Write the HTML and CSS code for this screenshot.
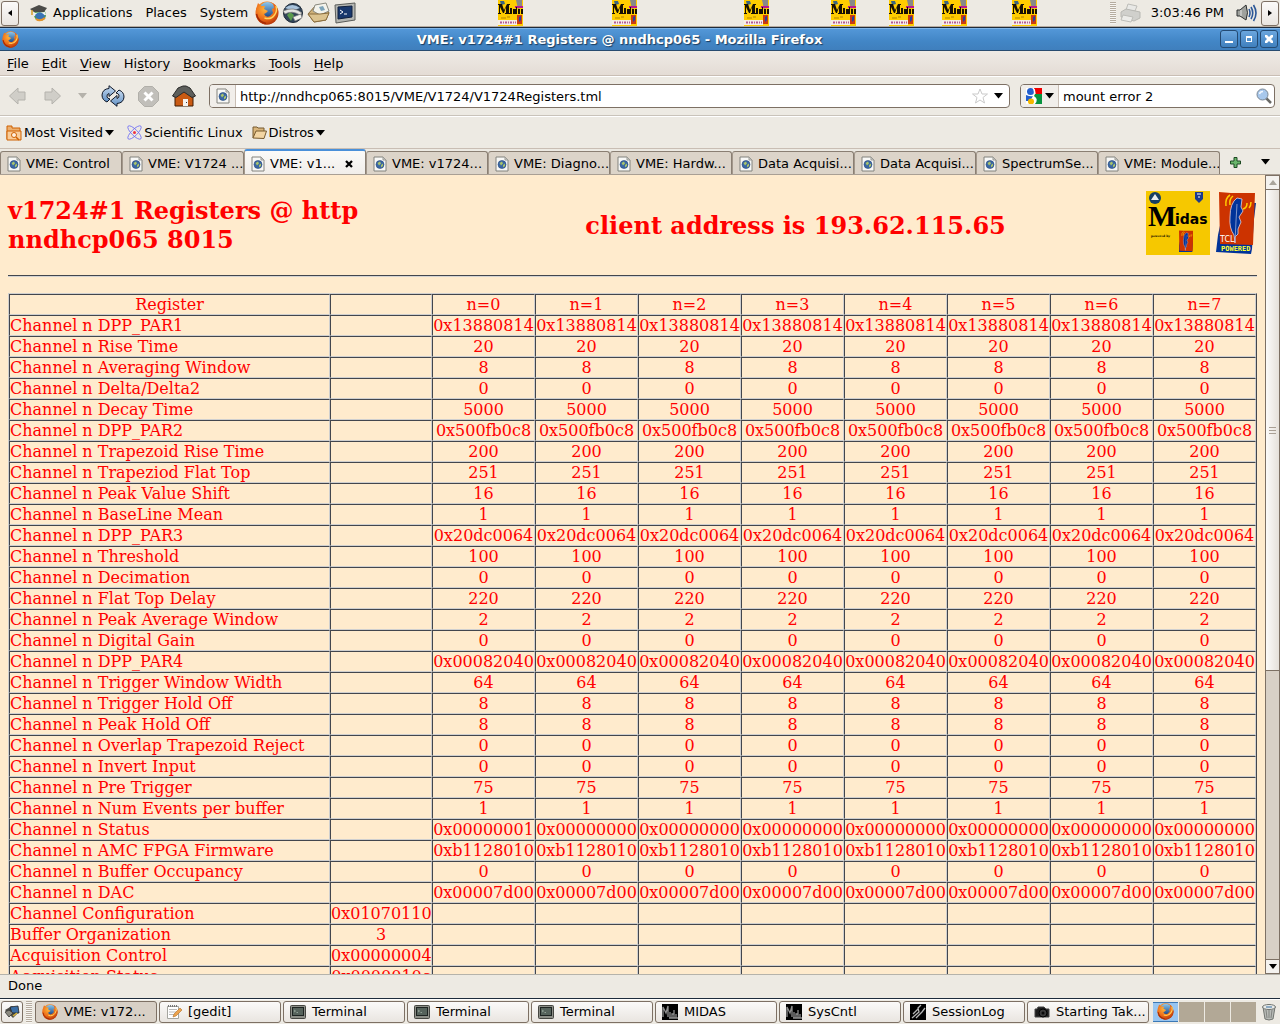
FILE: index.html
```html
<!DOCTYPE html>
<html lang="en">

<head>
    <meta charset="UTF-8">
    <title>VME: v1724#1 Registers @ nndhcp065</title>
    <link rel="stylesheet" href="styles.css">
</head>

<body>
    <!-- shared icons -->
    <svg class="defs" width="0" height="0">
        <defs>
            <radialGradient id="foxFill" cx="40%" cy="30%" r="75%">
                <stop offset="0" stop-color="#ffb53a" />
                <stop offset="0.6" stop-color="#ec6a17" />
                <stop offset="1" stop-color="#b03008" />
            </radialGradient>
            <linearGradient id="globeFill" x1="0" y1="0" x2="0" y2="1">
                <stop offset="0" stop-color="#8cc8ee" />
                <stop offset="1" stop-color="#16407f" />
            </linearGradient>
            <linearGradient id="arrowFill" x1="0" y1="0" x2="0" y2="1">
                <stop offset="0" stop-color="#c9dcf0" />
                <stop offset="1" stop-color="#5e8fc4" />
            </linearGradient>
        </defs>
        <symbol id="firefox" viewBox="0 0 24 24">
            <circle cx="12" cy="12" r="11.5" fill="url(#foxFill)" />
            <circle cx="12.500" cy="9" r="8" fill="url(#globeFill)" />
            <path d="M1 8 L3 2 L6 5 L10 5 L9 8 L13 10 L11 12 L9 13 Q11 17 15 15 L18 12 L17 8 L19 7 L18 2 Q24 7 23 14 Q20 23 12 23.500 Q2 23 1 13 Z" fill="url(#foxFill)" />
            <path d="M21 5 Q22.500 10 19.500 14 Q16 19 9.500 17" fill="none" stroke="#ffd35a" stroke-width="1.500" />
            <path d="M1.500 13 Q3 21 11 22.500" fill="none" stroke="#a52a05" stroke-width="1.500" />
        </symbol>
        <symbol id="page" viewBox="0 0 14 16">
            <path d="M1 1 H10 L13 4 V15 H1 Z" fill="#f8f8f6" stroke="#82827d" />
            <path d="M10 1 V4 H13 Z" fill="#d5d5d0" stroke="#9a9a95" />
            <circle cx="7" cy="8.500" r="4" fill="#3a67a5" stroke="#27487c" stroke-width=".6" />
            <path d="M4.500 7 L7 5.500 L8 7.500 L6 9.500 Z M8 9 L10 7.500 L10 10 L8 11.500 Z" fill="#a9c46a" />
        </symbol>
        <symbol id="tcl" viewBox="0 0 40 64">
            <path d="M36 12 L40 12 L38 28 L36 58 L35 63 L0 61 L2 44 L5 30 Z" fill="#003399" />
            <path d="M3 1 L15 2 L39 2 L37 54 L4 53 Z" fill="#cc3300" />
            <path d="M10 15 Q9 7 14 4 M14 14 Q13 8 17 5 M27 18 Q31 17 31 12 M33 17 Q35 15 35 11" fill="none" stroke="#ffcc00" stroke-width="1.500" />
            <path d="M19 52 L18 44 Q13 37 14 26 Q14 12 21 7 L26 8 L25 16 L27 20 L23 26 L25 31 L22 38 L22 43 L19 46 Z" fill="#003399" stroke="#dfd3df" stroke-width=".8" />
            <path d="M19 51 L20 30 L21 13" fill="none" stroke="#9cacd4" stroke-width=".8" />
        </symbol>
        <symbol id="midas" viewBox="0 0 25 26">
            <path d="M0 0 H25 V26 H0 Z" fill="#ffcc00" />
            <path d="M2 1 L6 1 L7 4 L3 5 Z" fill="#3b6580" />
            <path d="M18 0 H24 V7 L20 9 Z" fill="#888" />
            <path d="M17 6 H25 V8 H17 Z" fill="#bd168d" />
            <path d="M0 20 H19 V25 H0 Z" fill="#f5eee5" />
            <path d="M2 22.500 H18" fill="none" stroke="#b35895" stroke-width="2" stroke-dasharray="2 1 1 1" />
            <path d="M3 18 H8 M9 17 H12" stroke="#b58700" />
            <path d="M19 15 H24 V24 H19 Z" fill="#c93b12" />
            <path d="M21 22 L21 17 L23 16 V20 Z" fill="#2345a0" />
            <path d="M0 4 H4 L6 10 L9 4 H12 V5 H11 V13 H12 V14 H7 V13 H8 V7 L6 13 H5 L2 7 V13 H3 V14 H0 V13 H1 V5 H0 Z M12 8 H14 V14 H12 Z M15 9 H18 V7 H19 V14 H15 Z M20 9 H22 V14 H20 Z M23 9 H25 V14 H23 Z" fill="#171003" />
        </symbol>
        <symbol id="terminal" viewBox="0 0 16 16">
            <rect x=".5" y="1.500" width="15" height="13" rx="1" fill="#8d8f88" stroke="#464742" />
            <rect x="2.500" y="3.500" width="11" height="8" fill="#56635c" stroke="#1e2422" />
            <path d="M4 6 L5.500 7 L4 8 M6.500 8.500 H8" fill="none" stroke="#aebdb0" stroke-width=".7" />
        </symbol>
        <symbol id="midasbw" viewBox="0 0 16 16">
            <path d="M0 0 H16 V16 H0 Z" fill="#000" />
            <path d="M1 13 V3 L4 9 L6 2 V13 M8 8 V14 M10 14 V10 H12 V6 V14 Z M14 10 V14 M7 14 H16" fill="none" stroke="#8f8f8f" stroke-width="1.300" />
        </symbol>
        <symbol id="down" viewBox="0 0 9 6">
            <path d="M0 0 H9 L4.500 5.500 Z" fill="#000" />
        </symbol>
    </svg>

    <div class="panel top-panel">
        <button class="hide-button" aria-label="Hide panel left"><svg width="4" height="6"><path d="M4 0 V6 L0 3 Z" /></svg></button>
        <div class="panel-menus">
            <svg class="menu-logo" width="18" height="18" viewBox="0 0 18 18">
                <circle cx="10" cy="11" r="6" fill="#4d9a47" />
                <path d="M4 9 L15 8 L16 11 L4 12 Z" fill="#eef2f4" />
                <path d="M5 11 Q10 5 15 12 L13 16 H7 Z" fill="#3973b5" />
                <path d="M6 15 Q10 18 15 14" stroke="#e3932c" stroke-width="2" fill="none" />
                <path d="M0 5 L9 1 L17 4 L14 8 L4 8 Z" fill="#4b4b48" />
                <path d="M2 6 V11" stroke="#d69c2b" stroke-width="1.500" />
            </svg>
            <button>Applications</button>
            <button>Places</button>
            <button>System</button>
        </div>
        <div class="launchers">
            <svg width="24" height="24"><use href="#firefox" /></svg>
            <svg width="22" height="22" viewBox="0 0 22 22">
                <circle cx="11" cy="11" r="9.500" fill="#314459" stroke="#1e2a38" />
                <path d="M3 6 Q10 0 18 6 Q11 9 3 6 Z" fill="#a8c3dc" />
                <path d="M5 13 L8 10 L12 13 L9 19 Z" fill="#5a9a4d" />
                <path d="M1 9 Q12 4 20 11 L18 13 Q10 8 3 12 Z" fill="#e3e4e2" stroke="#777" stroke-width=".7" />
                <path d="M11 15 L19 12 L20 16 L13 19 Z" fill="#f1f1ee" stroke="#777" stroke-width=".7" />
            </svg>
            <svg width="24" height="22" viewBox="0 0 24 22">
                <path d="M1 12 L9 3 L22 10 L19 18 L7 20 Z" fill="#cfb27b" stroke="#84693b" />
                <path d="M8 3 L19 1 L22 9 L13 13 L6 9 Z" fill="#f3f3ec" stroke="#8a8a80" />
                <path d="M12 5 L16 4 L18 8 L14 9 Z" fill="#7ca4ba" />
                <path d="M1 12 L13 12 L22 11 L19 18 L7 20 Z" fill="#dcc38f" stroke="#8a6d3d" />
            </svg>
            <svg width="22" height="22" viewBox="0 0 22 22">
                <path d="M1 3 L21 1 V18 L2 21 Z" fill="#b4b6b2" stroke="#5a5c59" />
                <path d="M4 5 L18 4 V15 L4 17 Z" fill="#19386d" stroke="#10203e" />
                <path d="M6 8 L9 10 L6 12 M10 12 H13" fill="none" stroke="#fff" />
            </svg>
        </div>
        <div class="applets">
            <svg width="25" height="26"><use href="#midas" /></svg>
            <svg width="25" height="26"><use href="#midas" /></svg>
            <svg width="25" height="26"><use href="#midas" /></svg>
            <svg width="25" height="26"><use href="#midas" /></svg>
            <svg width="25" height="26"><use href="#midas" /></svg>
            <svg width="25" height="26"><use href="#midas" /></svg>
            <svg width="25" height="26"><use href="#midas" /></svg>
        </div>
        <div class="grip"></div>
        <svg class="printer" width="22" height="20" viewBox="0 0 22 20">
            <path d="M6 7 L8 1 L17 3 L15 8 Z" fill="#e9e9e6" stroke="#bdbdb8" />
            <path d="M1 9 L6 6 L20 9 V15 L14 18 L1 14 Z" fill="#d0d0cc" stroke="#b8b8b3" />
            <path d="M3 12 L13 14 L11 19 L1 17 Z" fill="#ecece9" stroke="#bdbdb8" />
        </svg>
        <time class="clock">3:03:46 PM</time>
        <svg class="volume" width="21" height="20" viewBox="0 0 21 20">
            <path d="M1 7 H4 L10 2 Q13 10 10 17 L4 13 H1 Z" fill="#9fa19d" stroke="#2e3030" />
            <path d="M5 7 V13" stroke="#e6e6e6" />
            <path d="M13 6 Q15 10 13 14 M15 4 Q18.500 10 15 16 M17.500 2 Q22.500 10 17.500 18" fill="none" stroke="#2b5797" stroke-width="1.600" />
        </svg>
        <button class="hide-button" aria-label="Hide panel right"><svg width="4" height="6"><path d="M0 0 V6 L4 3 Z" /></svg></button>
    </div>

    <div class="title-bar">
        <svg width="17" height="17"><use href="#firefox" /></svg>
        <div class="window-title">VME: v1724#1 Registers @ nndhcp065 - Mozilla Firefox</div>
        <button aria-label="Minimize"><svg width="16" height="16"><path d="M4 10 H12 V12 H4 Z" /></svg></button>
        <button aria-label="Maximize"><svg width="16" height="16"><path d="M5 5 H11 V11 H5 Z M6 7 V10 H10 V7 Z" fill-rule="evenodd" /></svg></button>
        <button aria-label="Close"><svg width="16" height="16"><path d="M4 4 H6 L8 6 L10 4 H12 V6 L10 8 L12 10 V12 H10 L8 10 L6 12 H4 V10 L6 8 L4 6 Z" /></svg></button>
    </div>

    <div class="menu-bar">
        <button><u>F</u>ile</button>
        <button><u>E</u>dit</button>
        <button><u>V</u>iew</button>
        <button>Hi<u>s</u>tory</button>
        <button><u>B</u>ookmarks</button>
        <button><u>T</u>ools</button>
        <button><u>H</u>elp</button>
    </div>

    <div class="nav-bar">
        <button class="nav-back" aria-label="Back"><svg width="17" height="18" viewBox="0 0 17 18"><path d="M.5 9 L9 1 V5 H16 V13 H9 V17 Z" fill="#d0cec8" stroke="#b4b2ac" /></svg></button>
        <button class="nav-forward" aria-label="Forward"><svg width="17" height="18" viewBox="0 0 17 18"><path d="M16.500 9 L8 1 V5 H1 V13 H8 V17 Z" fill="#d0cec8" stroke="#b4b2ac" /></svg></button>
        <button class="nav-recent" aria-label="Recent pages"><svg width="9" height="6" viewBox="0 0 9 6"><path d="M0 0 H9 L4.500 5.500 Z" fill="#b5b2ab" /></svg></button>
        <button class="nav-reload" aria-label="Reload">
            <svg width="24" height="22" viewBox="0 0 24 22">
                <path d="M6 17 Q1 15 1 10 Q1.500 4 8 3.500 V.7 L14.500 6 L8 11.500 V8.500 Q5.500 9 6 12 Q6.500 13.500 9 14 Z" fill="url(#arrowFill)" stroke="#101828" />
                <path d="M18 5 Q23 7 23 12 Q22.500 18 16 18.500 V21.300 L9.500 16 L16 10.500 V13.500 Q18.500 13 18 10 Q17.500 8.500 15 8 Z" fill="url(#arrowFill)" stroke="#101828" />
            </svg>
        </button>
        <button class="nav-stop" aria-label="Stop">
            <svg width="21" height="21" viewBox="0 0 21 21">
                <path d="M6.500 .5 H14.500 L20.500 6.500 V14.500 L14.500 20.500 H6.500 L.5 14.500 V6.500 Z" fill="#c1bfba" stroke="#b1afa9" />
                <path d="M6.500 6.500 L14.500 14.500 M14.500 6.500 L6.500 14.500" stroke="#fff" stroke-width="3" />
            </svg>
        </button>
        <button class="nav-home" aria-label="Home">
            <svg width="24" height="22" viewBox="0 0 24 22">
                <path d="M3 10 L12 4 L21 10 V21 H3 Z" fill="#c95a13" stroke="#3f1c05" />
                <path d="M0.500 11 L6 3 L11 1 H14 L18 3 L23.500 11 L20 12.500 L12 7 L4 12.500 Z" fill="#5d5f5c" stroke="#2b2b2a" />
                <path d="M11 14 H16 V21 H11 Z" fill="#f5f2ee" />
                <path d="M14 17 H15 V18 H14 Z" fill="#333" />
            </svg>
        </button>
        <div class="field url-field">
            <button class="field-button site-button" aria-label="Site identity"><svg width="14" height="16"><use href="#page" /></svg></button>
            <input type="text" aria-label="Location" value="http://nndhcp065:8015/VME/V1724/V1724Registers.tml">
            <svg class="star" width="16" height="16" viewBox="0 0 16 16"><path d="M8 1 L10 6 L15.500 6 L11 9.500 L12.500 15 L8 12 L3.500 15 L5 9.500 L.5 6 L6 6 Z" fill="#fff" stroke="#c9c9c9" /></svg>
            <button class="history-button" aria-label="Show history"><svg width="9" height="6"><use href="#down" /></svg></button>
        </div>
        <div class="field search-field">
            <button class="field-button engine-button" aria-label="Search engine">
                <svg width="16" height="16" viewBox="0 0 16 16">
                    <path d="M0 0 H16 V16 H0 Z" fill="#fff" />
                    <path d="M8 0 H16 V6 H9 Z" fill="#f00000" />
                    <path d="M9 6 H16 V16 H9 Q13 11 8 8 Z" fill="#089440" />
                    <path d="M0 7 Q5 9 7 8 L4 13 H0 Z" fill="#245fce" />
                    <circle cx="4.500" cy="3.500" r="3.500" fill="#245fce" />
                    <circle cx="5" cy="13.500" r="3" fill="#f5b800" />
                    <path d="M8 1 L9 6" stroke="#fff" stroke-width="1.500" />
                </svg>
                <svg width="9" height="6"><use href="#down" /></svg>
            </button>
            <input type="text" aria-label="Search" value="mount error 2">
            <button class="go-button" aria-label="Go">
                <svg width="16" height="16" viewBox="0 0 16 16">
                    <path d="M10 10 L15 15" stroke="#6a6a67" stroke-width="2.500" />
                    <circle cx="6.500" cy="6.500" r="5.500" fill="#a8c8ec" stroke="#7b8794" />
                    <path d="M3.500 6 Q4 3.500 7 3.500" fill="none" stroke="#f3f8ff" stroke-width="1.500" />
                </svg>
            </button>
        </div>
    </div>

    <div class="bookmarks-bar">
        <button>
            <svg width="16" height="16" viewBox="0 0 16 16">
                <path d="M1 14 V1 H6 V3 H14 V14 Z" fill="#ecb070" stroke="#cf6000" />
                <path d="M1 15 V6 H15 V15 Z" fill="#f9cc98" stroke="#cf6000" />
                <circle cx="8" cy="10" r="2.500" fill="#fff0df" stroke="#cf6000" />
                <path d="M10 12 L13 15" stroke="#cf6000" stroke-width="1.500" />
            </svg>
            Most Visited
            <svg width="9" height="6"><use href="#down" /></svg>
        </button>
        <a href="#">
            <svg width="15" height="15" viewBox="0 0 15 15">
                <g fill="none" stroke="#6b6bf5" stroke-width=".8">
                    <ellipse cx="7.500" cy="7.500" rx="3" ry="9" transform="rotate(45 7.500 7.500)" />
                    <ellipse cx="7.500" cy="7.500" rx="3" ry="9" transform="rotate(-45 7.500 7.500)" />
                </g>
                <circle cx="7.500" cy="7.500" r="1.500" fill="#ee3344" />
            </svg>
            Scientific Linux
        </a>
        <button>
            <svg width="15" height="13" viewBox="0 0 15 13">
                <path d="M1 12 V1 H5 L6 2 H12 V5" fill="#d9b57b" stroke="#775a2e" />
                <path d="M1 12 L4 5 H14.500 L12 12.500 Z" fill="#f2d5a3" stroke="#775a2e" />
            </svg>
            Distros
            <svg width="9" height="6"><use href="#down" /></svg>
        </button>
    </div>

    <div class="tab-strip">
        <div class="tabs">
            <button class="tab"><svg width="14" height="16"><use href="#page" /></svg><span>VME: Control</span></button>
            <button class="tab"><svg width="14" height="16"><use href="#page" /></svg><span>VME: V1724 ...</span></button>
            <button class="tab active"><svg width="14" height="16"><use href="#page" /></svg><span>VME: v1...</span><svg class="tab-close" width="8" height="8" viewBox="0 0 8 8"><path d="M1 1 L7 7 M7 1 L1 7" stroke="#000" stroke-width="2.300" /></svg></button>
            <button class="tab"><svg width="14" height="16"><use href="#page" /></svg><span>VME: v1724...</span></button>
            <button class="tab"><svg width="14" height="16"><use href="#page" /></svg><span>VME: Diagno...</span></button>
            <button class="tab"><svg width="14" height="16"><use href="#page" /></svg><span>VME: Hardw...</span></button>
            <button class="tab"><svg width="14" height="16"><use href="#page" /></svg><span>Data Acquisi...</span></button>
            <button class="tab"><svg width="14" height="16"><use href="#page" /></svg><span>Data Acquisi...</span></button>
            <button class="tab"><svg width="14" height="16"><use href="#page" /></svg><span>SpectrumSe...</span></button>
            <button class="tab"><svg width="14" height="16"><use href="#page" /></svg><span>VME: Module...</span></button>
        </div>
        <button class="tab-tool" aria-label="New tab"><svg width="11" height="11" viewBox="0 0 11 11"><path d="M4 .5 H7 V4 H10.500 V7 H7 V10.500 H4 V7 H.5 V4 H4 Z" fill="#69b56b" stroke="#1d4a22" /></svg></button>
        <button class="tab-tool" aria-label="List all tabs"><svg width="9" height="6"><use href="#down" /></svg></button>
    </div>

    <div class="viewport">
        <div class="page">
            <div class="page-header">
                <h1>v1724#1 Registers @ http nndhcp065 8015</h1>
                <h1 class="client">client address is 193.62.115.65</h1>
                <div class="logos">
                    <svg width="64" height="64" viewBox="0 0 64 64">
                        <path d="M0 0 H64 V64 H0 Z" fill="#f6c800" />
                        <circle cx="9" cy="7" r="6" fill="#173f63" />
                        <path d="M5 9 L9 3 L13 9 Z" fill="#e8edf0" />
                        <path d="M49 1 H57 V8 L53 12 L49 8 Z" fill="#1c3a8c" />
                        <path d="M51 3 H55 M52 6 H54" stroke="#fff" />
                        <text class="midas-m" x="2" y="35">M</text>
                        <text class="midas-idas" x="29" y="33">idas</text>
                        <text class="midas-by" x="5" y="46">powered by</text>
                        <svg x="33" y="39" width="14" height="22" viewBox="3 0 35 56" preserveAspectRatio="none"><use href="#tcl" width="40" height="64" /></svg>
                    </svg>
                    <svg width="40" height="64" viewBox="0 0 40 64">
                        <use href="#tcl" />
                        <text class="tcl-name" x="4" y="51">TCL</text>
                        <text class="tcl-powered" x="5" y="60">POWERED</text>
                    </svg>
                </div>
            </div>
            <hr>
            <table class="registers">
                <colgroup>
                    <col>
                    <col class="global">
                    <col class="channel" span="8">
                </colgroup>
                <tbody id="registers"></tbody>
            </table>
        </div>
        <div class="scrollbar">
            <button aria-label="Scroll up"><svg width="8" height="5"><path d="M0 5 H8 L4 0 Z" fill="#aaa59c" /></svg></button>
            <div class="thumb"><i></i><i></i><i></i></div>
            <div class="trough"></div>
            <button aria-label="Scroll down"><svg width="8" height="5"><path d="M0 0 H8 L4 5 Z" /></svg></button>
        </div>
    </div>

    <div class="status-bar">Done</div>

    <div class="panel bottom-panel">
        <button class="show-desktop" aria-label="Show desktop">
            <svg width="16" height="16" viewBox="0 0 16 16">
                <path d="M1 6 L8 2 L15 8 L9 14 Z" fill="#4c4c46" />
                <path d="M6 3 L14 2 L15 9 L8 9 Z" fill="#3b6ea5" stroke="#222" stroke-width=".8" />
                <path d="M1 8 L5 6 L9 9 L5 13 Z" fill="#8b8a80" stroke="#333" stroke-width=".8" />
                <path d="M9 12 L13 9" stroke="#d8b53a" stroke-width="1.500" />
            </svg>
        </button>
        <div class="grip"></div>
        <div class="tasks">
            <button class="task active"><svg width="16" height="16"><use href="#firefox" /></svg>VME: v172...</button>
            <button class="task">
                <svg width="16" height="16" viewBox="0 0 16 16">
                    <path d="M1.500 2.500 H12.500 V14.500 H1.500 Z" fill="#fff" stroke="#a5a59f" />
                    <path d="M3 5.500 H11 M3 8 H11 M3 10.500 H8" stroke="#bbb" />
                    <path d="M2 2 H12" stroke="#777" stroke-dasharray="1 1" stroke-width="2" />
                    <path d="M7 13 L8 10 L14 4 L16 6 L10 12 Z" fill="#eda34d" stroke="#b07028" stroke-width=".6" />
                </svg>[gedit]
            </button>
            <button class="task"><svg width="16" height="16"><use href="#terminal" /></svg>Terminal</button>
            <button class="task"><svg width="16" height="16"><use href="#terminal" /></svg>Terminal</button>
            <button class="task"><svg width="16" height="16"><use href="#terminal" /></svg>Terminal</button>
            <button class="task"><svg width="16" height="16"><use href="#midasbw" /></svg>MIDAS</button>
            <button class="task"><svg width="16" height="16"><use href="#midasbw" /></svg>SysCntl</button>
            <button class="task">
                <svg width="16" height="16" viewBox="0 0 16 16">
                    <path d="M0 0 H16 V16 H0 Z" fill="#000" />
                    <path d="M2 14 L9 8 L8 4 L11 1 M6 14 L12 8 L15 4 M3 10 L8 5" fill="none" stroke="#b5b5b5" stroke-width="1.300" />
                </svg>SessionLog
            </button>
            <button class="task">
                <svg width="16" height="16" viewBox="0 0 16 16">
                    <path d="M1 5 H3 L4 3 H10 L12 5 H15 V13 H1 Z" fill="#1c1c1c" stroke="#444" />
                    <circle cx="9" cy="9" r="4" fill="#3a3a3a" stroke="#000" />
                    <circle cx="9" cy="9" r="1.500" fill="#0a0a0a" />
                </svg>Starting Tak...
            </button>
        </div>
        <div class="workspaces">
            <button class="current" aria-label="Workspace 1"><svg width="17" height="17"><use href="#firefox" /></svg></button>
            <button aria-label="Workspace 2"></button>
            <button aria-label="Workspace 3"></button>
            <button aria-label="Workspace 4"></button>
        </div>
        <svg class="trash" width="16" height="18" viewBox="0 0 16 18">
            <path d="M2 4 L4 16 Q8 18 12 16 L14 4 Z" fill="#b9bcb8" stroke="#70736f" />
            <path d="M5 7 L6 15 M8 7 V15 M11 7 L10 15" stroke="#80837f" />
            <ellipse cx="8" cy="4" rx="6.500" ry="2.500" fill="#e8eae7" stroke="#70736f" />
            <path d="M5 4 H11" stroke="#6f94b7" stroke-width="1.500" />
        </svg>
    </div>

    <script>
        // name, value in every channel column
        var channelRegs = [
            ['Channel n DPP_PAR1', '0x13880814'],
            ['Channel n Rise Time', '20'],
            ['Channel n Averaging Window', '8'],
            ['Channel n Delta/Delta2', '0'],
            ['Channel n Decay Time', '5000'],
            ['Channel n DPP_PAR2', '0x500fb0c8'],
            ['Channel n Trapezoid Rise Time', '200'],
            ['Channel n Trapeziod Flat Top', '251'],
            ['Channel n Peak Value Shift', '16'],
            ['Channel n BaseLine Mean', '1'],
            ['Channel n DPP_PAR3', '0x20dc0064'],
            ['Channel n Threshold', '100'],
            ['Channel n Decimation', '0'],
            ['Channel n Flat Top Delay', '220'],
            ['Channel n Peak Average Window', '2'],
            ['Channel n Digital Gain', '0'],
            ['Channel n DPP_PAR4', '0x00082040'],
            ['Channel n Trigger Window Width', '64'],
            ['Channel n Trigger Hold Off', '8'],
            ['Channel n Peak Hold Off', '8'],
            ['Channel n Overlap Trapezoid Reject', '0'],
            ['Channel n Invert Input', '0'],
            ['Channel n Pre Trigger', '75'],
            ['Channel n Num Events per buffer', '1'],
            ['Channel n Status', '0x00000000'],
            ['Channel n AMC FPGA Firmware', '0xb1128010'],
            ['Channel n Buffer Occupancy', '0'],
            ['Channel n DAC', '0x00007d00']
        ];

        // name, value for the whole board
        var boardRegs = [
            ['Channel Configuration', '0x01070110'],
            ['Buffer Organization', '3'],
            ['Acquisition Control', '0x00000004'],
            ['Acquisition Status', '0x0000010c']
        ];

        var body = document.getElementById('registers');

        function addRow(name, global, values, tag) {
            var row = body.insertRow();
            [name, global].concat(values).forEach(function (text) {
                var cell = document.createElement(tag);
                cell.textContent = text;
                row.appendChild(cell);
            });
        }

        function fill(fn) {
            var out = [];
            for (var n = 0; n < 8; n++) out.push(fn(n));
            return out;
        }

        addRow('Register', '', fill(function (n) { return 'n=' + n; }), 'th');
        channelRegs.forEach(function (reg) {
            addRow(reg[0], '', fill(function (n) {
                // channel 0 is the only one with its status bit set
                if (reg[0] == 'Channel n Status' && n == 0) return '0x00000001';
                return reg[1];
            }), 'td');
        });
        boardRegs.forEach(function (reg) {
            addRow(reg[0], reg[1], fill(function () { return ''; }), 'td');
        });
    </script>
</body>

</html>
```
FILE: styles.css
```css
* {
    box-sizing: border-box;
}

body {
    margin: 0;
    height: 100vh;
    display: flex;
    flex-direction: column;
    overflow: hidden;
    background-color: #edeae3;
    color: #000;
    font: 13px/16px "DejaVu Sans", sans-serif;
}

button,
input {
    margin: 0;
    padding: 0;
    border: none;
    background: none;
    color: inherit;
    font: inherit;
}

svg {
    display: block;
    flex: none;
}

.defs {
    position: absolute;
}

/* desktop panels */
.panel {
    display: flex;
    align-items: center;
}

.top-panel {
    height: 28px;
    padding: 0 1px 1px;
    border-bottom: 1px solid #1d2b3b;
    box-shadow: inset 0 -1px #b7aca0;
}

.hide-button,
.show-desktop,
.task {
    border: 1px solid #7d7064;
    border-radius: 3px;
    background: linear-gradient(#fbfaf9, #e9e5e0);
}

.hide-button {
    width: 18px;
    height: 25px;
    display: flex;
    align-items: center;
    justify-content: center;
}

.panel-menus {
    display: flex;
    align-items: center;
    margin-left: 11px;
    gap: 13px;
}

.menu-logo {
    margin-right: -8px;
}

.launchers {
    display: flex;
    align-items: center;
    margin-left: 7px;
    gap: 3px;
}

.applets {
    flex: 1;
    display: grid;
    grid-template-columns: 114fr 132fr 87fr 58fr 53fr 70fr 25fr;
    margin: 0 73px 0 142px;
}

.grip {
    width: 6px;
    height: 22px;
    background: repeating-linear-gradient(#b5ac9f 0 1px, #f7f5f2 1px 2px);
}

.printer {
    margin-left: 4px;
}

.clock {
    margin-left: 9px;
}

.volume {
    margin: 0 4px 0 12px;
}

/* window frame */
.title-bar {
    display: flex;
    align-items: center;
    height: 23px;
    padding: 0 2px;
    gap: 2px;
    border-bottom: 1px solid #284b6f;
    background: linear-gradient(#7fb5e8 0 1px, #5397d8 1px, #4286c6 60%, #3f7fbd);
}

.window-title {
    flex: 1;
    padding-top: 2px;
    color: #fff;
    font-weight: bold;
    text-align: center;
    text-shadow: 1px 1px 1px #1c3b5c;
}

.title-bar button {
    width: 18px;
    height: 18px;
    border: 1px solid #244a72;
    border-radius: 3px;
    background: linear-gradient(#6ba6de, #3f7fbd);
    fill: #fff;
}

.menu-bar {
    display: flex;
    height: 25px;
    border-bottom: 1px solid #c9beb4;
    background: linear-gradient(#eeeae5, #e4dcd5);
}

.menu-bar button {
    padding: 1px 6px 0 7px;
}

.menu-bar u {
    text-underline-offset: 2px;
}

.nav-bar {
    display: flex;
    align-items: center;
    height: 40px;
    padding: 0 5px 0 9px;
    border-top: 1px solid #fff;
    border-bottom: 1px solid #c9c3ba;
}

.nav-forward {
    margin-left: 18px;
}

.nav-recent {
    margin-left: 17px;
}

.nav-reload {
    margin-left: 14px;
}

.nav-stop,
.nav-home {
    margin-left: 13px;
}

.field {
    display: flex;
    align-items: center;
    height: 24px;
    border: 1px solid #7d7064;
    border-radius: 4px;
    background-color: #fff;
    overflow: hidden;
}

.field input {
    flex: 1;
    min-width: 0;
    height: 22px;
    padding: 0 4px;
    outline: none;
}

.field-button {
    display: flex;
    align-items: center;
    justify-content: center;
    align-self: stretch;
    border-right: 1px solid #c9beb4;
    background-color: #f1eeea;
}

.url-field {
    flex: 1;
    margin-left: 13px;
    margin-right: 10px;
}

.site-button {
    width: 26px;
}

.history-button {
    margin: 0 6px;
}

.search-field {
    width: 255px;
}

.engine-button {
    width: 38px;
    gap: 3px;
}

.go-button {
    margin-right: 2px;
}

.bookmarks-bar {
    display: flex;
    align-items: center;
    height: 33px;
    padding: 0 6px;
    gap: 13px;
    border-top: 1px solid #fff;
    border-bottom: 1px solid #c9beb4;
}

.bookmarks-bar button,
.bookmarks-bar a {
    display: flex;
    align-items: center;
    gap: 2px;
    color: #000;
    text-decoration: none;
}

.bookmarks-bar a {
    margin-right: -4px;
}

/* tabs */
.tab-strip {
    display: flex;
    align-items: stretch;
    height: 26px;
    padding-top: 1px;
    border-bottom: 1px solid #a99f94;
}

.tabs {
    flex: 1;
    display: flex;
    align-items: flex-end;
    min-width: 0;
}

.tab {
    flex: 1 1 0;
    min-width: 0;
    height: 23px;
    display: flex;
    align-items: center;
    padding: 2px 0 0 6px;
    gap: 5px;
    border: 1px solid #8a7f73;
    border-bottom: none;
    border-radius: 3px 3px 0 0;
    background-color: #dcd4c9;
    white-space: nowrap;
    overflow: hidden;
}

.tab + .tab {
    border-left-color: #a3988c;
}

.tab.active {
    height: 25px;
    border-top: 2px solid #4a90d9;
    background: linear-gradient(#fbfaf8, #f1eeea);
}

.tab-close {
    margin-left: auto;
    margin-right: 12px;
}

.tab-tool {
    width: 30px;
    display: flex;
    align-items: center;
    justify-content: center;
}

/* web page */
.viewport {
    flex: 1;
    min-height: 0;
    display: flex;
    background-color: #ffebcd;
}

.page {
    flex: 1;
    min-width: 0;
    padding: 8px 8px 0;
    overflow: hidden;
    color: #ff0000;
    font: 16px/19px "DejaVu Serif", serif;
}

.page-header {
    display: grid;
    grid-template-columns: 35% 1fr auto;
    align-items: center;
    height: 84px;
}

h1 {
    margin: 0;
    padding-right: 40px;
    font-size: 24px;
    line-height: 29px;
}

h1.client {
    padding: 0;
    text-align: center;
}

.logos {
    align-self: start;
    display: flex;
    padding: 8px 1px 0 0;
    gap: 6px;
}

.midas-m {
    font: bold 30px "Liberation Serif", serif;
}

.midas-idas {
    font: bold 14px "DejaVu Sans", sans-serif;
}

.midas-by {
    font: bold 3px "DejaVu Serif", serif;
}

.tcl-name {
    fill: #fff;
    font: 8px "DejaVu Sans", sans-serif;
}

.tcl-powered {
    fill: #ffff33;
    font: bold 7px "DejaVu Sans Mono", monospace;
}

hr {
    height: 2px;
    margin: 8px 0 16px;
    border: none;
    border-top: 1px solid #43464d;
    border-bottom: 1px solid #d3d3d3;
}

.registers {
    width: 100%;
    table-layout: fixed;
    border: 1px solid;
    border-color: #cfcfcf #43464d #43464d #cfcfcf;
    border-spacing: 0;
}

.registers .global {
    width: 102px;
}

.registers .channel {
    width: 103px;
}

.registers th,
.registers td {
    height: 21px;
    padding: 0;
    border: 1px solid;
    border-color: #43464d #cfcfcf #cfcfcf #43464d;
    font-weight: normal;
    text-align: center;
    white-space: nowrap;
}

.registers td:first-child {
    text-align: left;
}

.scrollbar {
    width: 15px;
    display: flex;
    flex-direction: column;
    border: 1px solid #7d7064;
    border-width: 0 1px;
    background-color: #d8d0c6;
}

.scrollbar button {
    height: 15px;
    display: flex;
    align-items: center;
    justify-content: center;
    border: 1px solid #7d7064;
    border-width: 1px 0;
    background-color: #f4f2ef;
}

.thumb {
    flex: 481;
    display: flex;
    flex-direction: column;
    align-items: center;
    justify-content: center;
    gap: 2px;
    border-bottom: 1px solid #7d7064;
    background: linear-gradient(to right, #fcfbfa, #e5e0da);
}

.thumb i {
    width: 7px;
    height: 1px;
    background-color: #a99f94;
}

.trough {
    flex: 288;
}

.status-bar {
    height: 24px;
    padding: 3px 8px;
    border-top: 1px solid #b5b3ab;
}

/* task list */
.bottom-panel {
    height: 26px;
    padding: 0 3px 0 1px;
    border-top: 1px solid #1d2b3b;
    box-shadow: inset 0 1px #fff;
}

.show-desktop {
    width: 22px;
    height: 22px;
    padding-left: 2px;
}

.bottom-panel .grip {
    margin: 0 3px;
}

.tasks {
    flex: 1;
    display: flex;
    gap: 2px;
    min-width: 0;
}

.task {
    flex: 1 1 0;
    min-width: 0;
    height: 22px;
    display: flex;
    align-items: center;
    padding-left: 6px;
    gap: 6px;
    white-space: nowrap;
    overflow: hidden;
}

.task.active {
    background: #d8d0c6;
}

.workspaces {
    display: flex;
    gap: 1px;
    margin: 0 5px 0 4px;
}

.workspaces button {
    width: 25px;
    height: 20px;
    background-color: #b2a896;
}

.workspaces .current {
    padding-left: 4px;
    border: 1px solid #3b78b5;
    border-width: 1px 0;
    background-color: #98c5f0;
}
```
